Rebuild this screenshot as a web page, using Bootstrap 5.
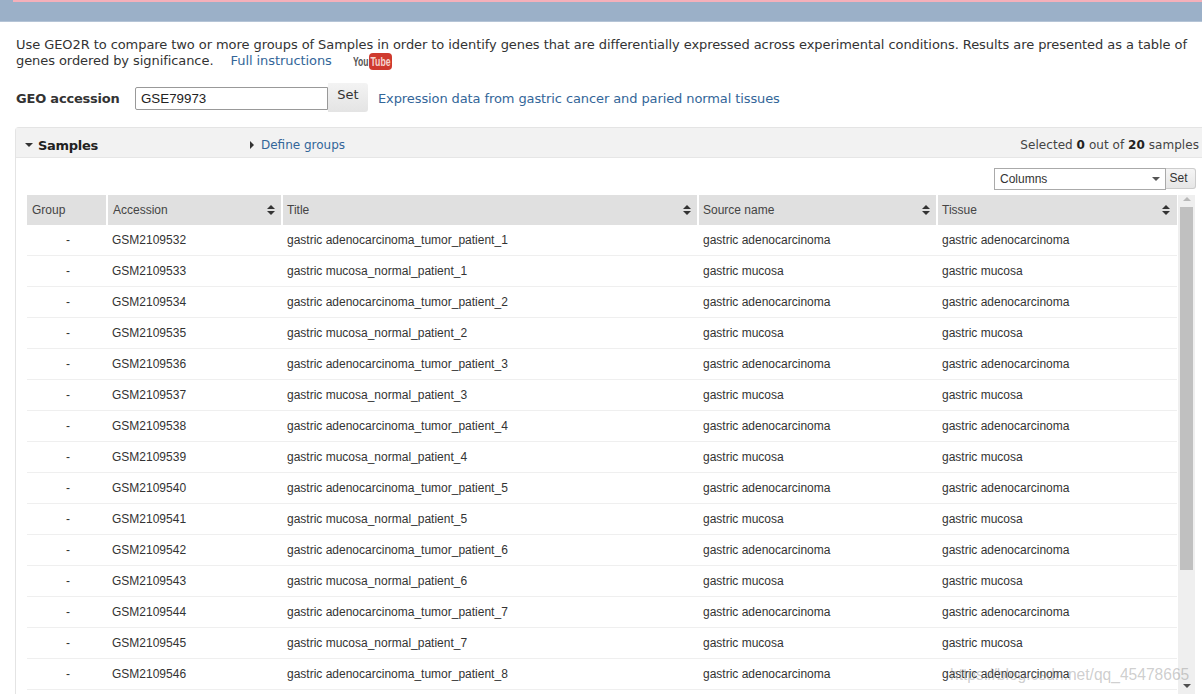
<!DOCTYPE html>
<html lang="en">
<head>
<meta charset="UTF-8" />
<title>GEO2R</title>
<link href="https://cdn.jsdelivr.net/npm/bootstrap@5.3.0/dist/css/bootstrap.min.css" rel="stylesheet" />
<style>
  html, body { height: 694px; overflow: hidden; }
  body { font-family: "DejaVu Sans", Verdana, sans-serif; font-size: 13px; line-height: 16px; color: #333; background: #fff; }
  a { color: #336699; text-decoration: none; }

  .top-band { height: 22px; background: #9bb0c8; padding-left: 13px; border-bottom: 1px solid #b5c4d6; }
  .top-pink { height: 2px; background: #f5b0ba; }

  .intro { padding: 15px 0 0 16px; height: 51px; width: 1190px; letter-spacing: -0.07px; }
  .intro a { margin: 0 17px 0 13px; }
  .yt-logo { vertical-align: -1px; margin: -4px 0; }

  .accession-row { height: 30px; margin: 10px 0 0 16px; }
  .accession-label { font-weight: 700; width: 119px; color: #333; letter-spacing: -0.2px; padding-top: 2px; }
  .accession-input { width: 193px; height: 23px; border: 1px solid #999; border-radius: 2px 0 0 2px; padding: 0 5px; font: 13.33px "Liberation Sans", Arial, sans-serif; color: #222; }
  .accession-set { width: 40px; height: 29px; margin-top: -1px; padding: 0 0 5px; border: 0; border-radius: 0 3px 3px 0; background: linear-gradient(#f3f3f3, #e4e4e4); color: #333; font-size: 13px; }
  .accession-title { margin-left: 10px; letter-spacing: -0.1px; padding-top: 2px; }

  .samples-panel { margin: 14px 0 0 15px; border: 1px solid #e4e4e4; border-right: 0; border-bottom: 0; border-radius: 4px 0 0 0; }
  .samples-head { height: 30px; background: #f2f2f2; border-bottom: 1px solid #e6e6e6; padding: 4px 3px 0 9px; }
  .samples-head b { color: #222; }
  .samples-toggle { width: 212px; letter-spacing: -0.3px; margin-top: 2px; }
  .define-link { font-size: 12px; }
  .tri-down { width: 0; height: 0; border: 4px solid transparent; border-top: 4px solid #333; border-bottom: 0; margin-right: 5px; }
  .tri-right { width: 0; height: 0; border: 4px solid transparent; border-left: 4px solid #333; border-right: 0; margin-right: 7px; }
  .selected-note { color: #444; font-size: 12px; letter-spacing: 0.05px; }

  .columns-bar { height: 37px; padding: 10px 6px 0 0; }
  .columns-select { width: 172px; height: 22px; border: 1px solid #aaa; padding: 0 5px; font: 12px/20px "Liberation Sans", Arial, sans-serif; color: #333; }
  .columns-select .tri-down { border-top-color: #555; }
  .columns-set { width: 30px; height: 21px; border: 1px solid #ccc; border-left: 0; border-radius: 0 3px 3px 0; background: linear-gradient(#f5f5f5, #e6e6e6); font: 12px/18px "Liberation Sans", Arial, sans-serif; color: #333; padding: 0 4px 2px 0; }

  .grid-wrap { margin-left: 11px; }
  .grid-box { width: 1150px; }
  .samples-grid { table-layout: fixed; width: 1150px; margin: 0; font: 12px "Liberation Sans", Arial, sans-serif; color: #333; border-collapse: separate; border-spacing: 0; }
  .samples-grid th { height: 30px; padding: 0 6px 0 4px; background: #e0e0e0; font-weight: 400; color: #444; border: 0; border-right: 2px solid #fff; vertical-align: middle; }
  .samples-grid th:first-child { padding-left: 5px; }
  .samples-grid th:nth-child(2) { padding-left: 5px; }
  .samples-grid th:last-child { border-right: 0; padding-right: 7px; }
  .samples-grid td { height: 31px; padding: 0 4px; border: 0; border-bottom: 1px solid #efefef; vertical-align: middle; color: #333; }
  .samples-grid td:first-child { text-align: center; padding-left: 1px; padding-right: 0; }
  .col-group { width: 81px; }
  .col-accession { width: 175px; }
  .col-title { width: 416px; }
  .col-source { width: 239px; }
  .sort-cell { display: flex; justify-content: space-between; align-items: center; }

  .fake-scroll { width: 17px; margin-left: 1px; background: #efefef; height: 500px; padding: 12px 2px 0; position: relative; }
  .fake-scroll::before { content: ""; position: absolute; left: 5px; top: 2px; border: 4px solid transparent; border-bottom: 4px solid #b8b8b8; border-top: 0; }
  .scroll-thumb { height: 363px; background: #c0c0c0; }
  .page-mark { position: absolute; left: 950px; top: 666px; font: 15.6px "Liberation Sans", Arial, sans-serif; color: rgba(130, 130, 130, .4); white-space: nowrap; }
  .scroll-down { position: absolute; left: 1183px; top: 684px; border: 4px solid transparent; border-top: 4px solid #505050; border-bottom: 0; }
</style>
</head>
<body>
  <div class="top-band"><div class="top-pink"></div></div>

  <div class="intro">
    Use GEO2R to compare two or more groups of Samples in order to identify genes that are differentially expressed across experimental conditions. Results are presented as a table of genes ordered by significance.
    <a href="#">Full instructions</a>
    <svg class="yt-logo" width="39" height="17" viewBox="0 0 39 17">
      <rect x="16" y="0" width="23" height="17" rx="4" fill="#cf3a2e"/>
      <text transform="translate(0 13) scale(.66 1)" font-family="Liberation Sans, Arial, sans-serif" font-size="13" font-weight="700" fill="#555">You</text>
      <text transform="translate(17.5 13) scale(.67 1)" font-family="Liberation Sans, Arial, sans-serif" font-size="13" font-weight="700" fill="#f6d5cf">Tube</text>
    </svg>
  </div>

  <div class="accession-row d-flex align-items-center">
    <div class="accession-label">GEO accession</div>
    <input class="accession-input" type="text" value="GSE79973" />
    <button class="accession-set" type="button">Set</button>
    <a class="accession-title" href="#">Expression data from gastric cancer and paried normal tissues</a>
  </div>

  <div class="samples-panel">
    <div class="samples-head d-flex align-items-center">
      <span class="tri-down"></span>
      <b class="samples-toggle">Samples</b>
      <span class="tri-right"></span>
      <a href="#" class="define-link">Define groups</a>
      <span class="selected-note ms-auto">Selected <b>0</b> out of <b>20</b> samples</span>
    </div>

    <div class="columns-bar d-flex justify-content-end">
      <div class="columns-select d-flex align-items-center justify-content-between">Columns <span class="tri-down me-0"></span></div>
      <button class="columns-set" type="button">Set</button>
    </div>

    <div class="grid-wrap d-flex">
      <div class="grid-box">
        <table class="table samples-grid">
          <colgroup><col class="col-group" /><col class="col-accession" /><col class="col-title" /><col class="col-source" /><col /></colgroup>
          <thead>
            <tr id="grid-head"></tr>
          </thead>
          <tbody id="grid-body"></tbody>
        </table>
      </div>
      <div class="fake-scroll"><div class="scroll-thumb"></div></div>
    </div>
  </div>

  <span class="scroll-down"></span>
  <div class="page-mark">https://blog.csdn.net/qq_45478665</div>

<script>
  var sortIcon = '<svg width="8" height="10" viewBox="0 0 8 10"><path d="M4 0 8 4H0zM4 10 0 6h8z" fill="#333"/></svg>';
  var head = document.getElementById('grid-head');
  ['Group', 'Accession', 'Title', 'Source name', 'Tissue'].forEach(function (name, i) {
    var th = document.createElement('th');
    th.innerHTML = i === 0 ? name : '<div class="sort-cell"><span>' + name + '</span>' + sortIcon + '</div>';
    head.appendChild(th);
  });

  var body = document.getElementById('grid-body');
  for (var i = 0; i < 20; i++) {
    var tumor = i % 2 === 0;
    var patient = Math.floor(i / 2) + 1;
    var tissue = tumor ? 'gastric adenocarcinoma' : 'gastric mucosa';
    var title = tissue + '_' + (tumor ? 'tumor' : 'normal') + '_patient_' + patient;
    var tr = document.createElement('tr');
    ['-', 'GSM' + (2109532 + i), title, tissue, tissue].forEach(function (text) {
      var td = document.createElement('td');
      td.textContent = text;
      tr.appendChild(td);
    });
    body.appendChild(tr);
  }
</script>
<script src="https://cdn.jsdelivr.net/npm/bootstrap@5.3.0/dist/js/bootstrap.bundle.min.js"></script>
</body>
</html>
